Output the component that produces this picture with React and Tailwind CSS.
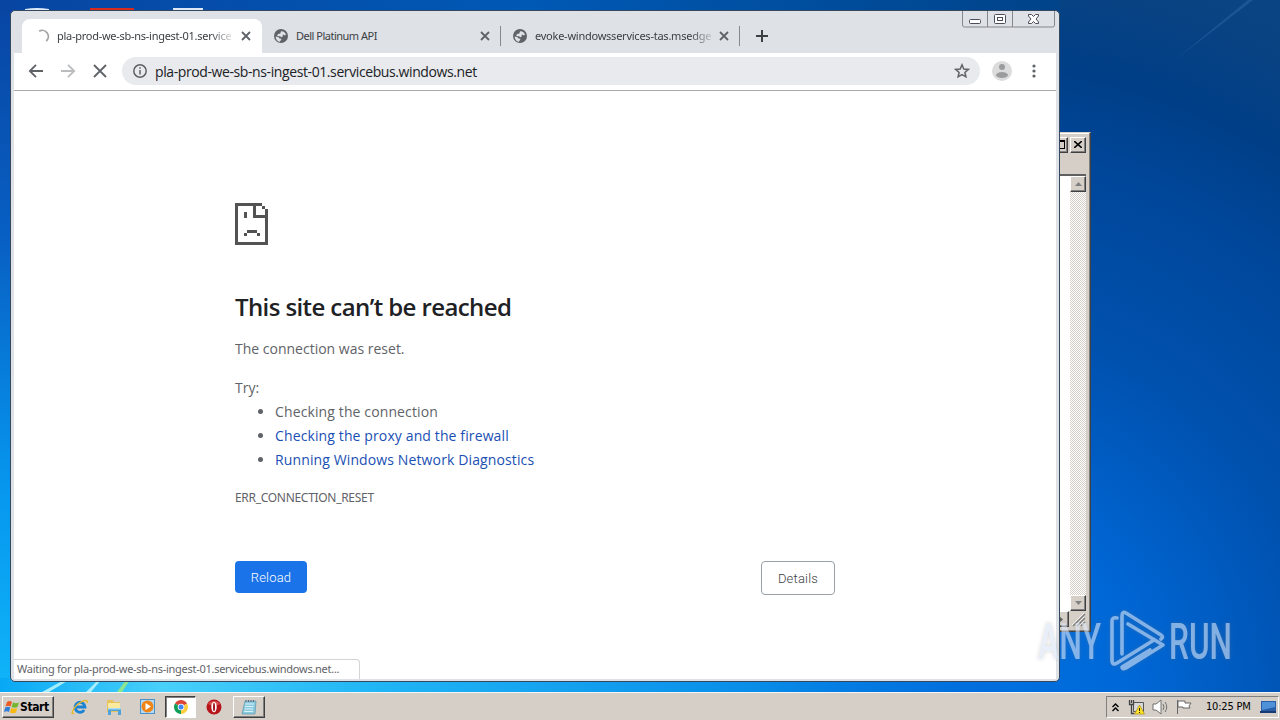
import React from 'react';

const tabs = [
    { title: 'pla-prod-we-sb-ns-ingest-01.service', active: true, tracking: 'tracking-[-0.27px]' },
    { title: 'Dell Platinum API', active: false, tracking: 'tracking-[-0.5px]' },
    { title: 'evoke-windowsservices-tas.msedge', active: false, tracking: 'tracking-[-0.24px]' },
];

const CloseIcon = () => (
    <svg width="10" height="10" viewBox="0 0 10 10" stroke="currentColor" strokeWidth="1.8" className="shrink-0">
        <path d="M1 1l8 8M9 1l-8 8" />
    </svg>
);

const Spinner = () => (
    <svg width="16" height="16" viewBox="0 0 16 16" fill="none" className="shrink-0">
        <path d="M4.200 3.300A6 6 0 0 1 11.200 13" stroke="#a3a3a6" strokeWidth="1.800" />
    </svg>
);

const Globe = () => (
    <svg width="14" height="14" viewBox="0 0 14 14" className="shrink-0">
        <circle cx="7" cy="7" r="7" fill="#5f6368" />
        <path d="M7 2.200c2.200-.4 4.600 1.400 5 3.600l-1.300.6-1.200-.9-1 .9.3 1.100-1.300.7-1.500-1H4.300L3 6.200 4.600 4.700l1.600.1z" fill="#dee1e6" />
        <path d="M1.600 7.500l2.600.6 1.500 1.400 1.800.3-.6 1.600-1 .6v.9C3.500 12.500 1.700 10.400 1.600 7.500z" fill="#dee1e6" />
    </svg>
);

const Tab = ({ title, active, tracking }) => (
    <div className={active
        ? 'relative flex h-[34px] w-[240px] items-center rounded-t-lg bg-white pl-[13px] pr-[11px] text-[#3c4043]'
        : 'relative flex h-[34px] w-[239px] items-center pl-3 pr-[11px] text-[#3c4043]'}
    >
        {active ? <Spinner /> : <Globe />}
        <span className={active ? 'ml-[6px] flex w-[176px]' : 'ml-2 flex w-[176px]'}>
            <span className={`whitespace-nowrap font-["Noto_Sans",sans-serif] text-[11px] ${tracking} ${title.length > 20 ? '[mask-image:linear-gradient(to_right,black_88%,rgba(0,0,0,0.2))]' : ''}`}>
                {title}
            </span>
        </span>
        <span className="ml-auto flex text-[#5f6368]"><CloseIcon /></span>
        {!active && <span className="absolute right-0 top-[7px] h-5 w-px bg-[#85888d]" />}
    </div>
);

const CaptionButtons = () => (
    <svg width="93" height="17" viewBox="0 0 93 17" fill="none" stroke="#85868f" className="absolute right-px top-0">
        <path d="M.5 0v14q0 2 2 2h88q2 0 2-2V0M25.500 0v16M50.500 0v16" />
        <g stroke="#4b4d58">
            <rect x="7.500" y="8.500" width="11" height="4" rx="1" fill="#fff" />
            <rect x="32.500" y="3.500" width="11" height="9" rx="1" fill="#fff" />
            <rect x="35.500" y="6.500" width="5" height="3" />
            <path d="M66.500 3.500h3l2 2 2-2h3v1.500l-2.500 3 2.500 3v1.500h-3l-2-2-2 2h-3V11l2.500-3-2.500-3z" fill="#fff" />
        </g>
    </svg>
);

const TabStrip = () => (
    <div className="relative flex h-[42px] bg-[#dee1e6] pl-2 pt-2">
        {tabs.map((t) => <Tab key={t.title} {...t} />)}
        <svg width="12" height="12" viewBox="0 0 12 12" stroke="#3c4043" strokeWidth="2" className="ml-4 mt-[11px]">
            <path d="M6 0v12M0 6h12" />
        </svg>
        <CaptionButtons />
    </div>
);

const Toolbar = () => (
    <div className="flex h-[38px] items-center border-b border-[#a8a9ab] bg-white pb-px pl-[14px]">
        <svg width="80" height="16" viewBox="0 0 80 16" fill="none" strokeWidth="1.800" className="shrink-0">
            <path d="M15 8H2.500M8 1.800L1.800 8 8 14.200" stroke="#5f6368" />
            <path d="M33 8h12.500M40 1.800L46.200 8 40 14.200" stroke="#babcbe" />
            <path d="M66 2l12 12M78 2L66 14" stroke="#5f6368" />
        </svg>
        <div className="ml-[14px] flex h-7 w-[858px] shrink-0 items-center rounded-full bg-[#e8eaed] pl-[11px] pr-[10px]">
            <svg width="14" height="14" viewBox="0 0 14 14" fill="none" stroke="#5f6368" strokeWidth="1.500">
                <circle cx="7" cy="7" r="6.200" />
                <path d="M7 6v4.500M7 3.300v1.500" />
            </svg>
            <span className="ml-2 whitespace-nowrap font-['Open_Sans',sans-serif] text-[14px] tracking-[-0.4px] text-[#202124]">
                pla-prod-we-sb-ns-ingest-01.servicebus.windows.net
            </span>
            <svg width="16" height="16" viewBox="0 0 16 16" fill="none" stroke="#5f6368" strokeWidth="1.500" className="ml-auto">
                <path d="M8 1.800l1.800 4.200 4.500.4-3.400 3 1 4.400L8 11.500l-3.900 2.300 1-4.400-3.400-3 4.500-.4z" />
            </svg>
        </div>
        <svg width="20" height="20" viewBox="0 0 20 20" className="ml-3">
            <circle cx="10" cy="10" r="10" fill="#dcdcdc" />
            <circle cx="10" cy="6" r="3" fill="#9b9c9e" />
            <ellipse cx="10" cy="14" rx="6" ry="3" fill="#9b9c9e" />
        </svg>
        <svg width="4" height="14" viewBox="0 0 4 14" fill="#5f6368" className="ml-5">
            <circle cx="2" cy="2" r="1.600" />
            <circle cx="2" cy="7" r="1.600" />
            <circle cx="2" cy="12" r="1.600" />
        </svg>
    </div>
);

const SadPage = () => (
    <svg width="33" height="42" viewBox="0 0 11 14" fill="#535353" shapeRendering="crispEdges">
        <path d="M0 0h9v1H7v3h3V2h1v12H0zM1 1v12h9V5H6V1zM9 1h1v1H9zM3 3h1v2H3zM4 9h3.400v1H4zM3 10h1v1H3zM7.300 10h1v1h-1z" fillRule="evenodd" />
    </svg>
);

const ErrorPage = () => (
    <div className="flex flex-1 flex-col bg-white">
        <div className="ml-[221px] w-[600px] pt-[112px] font-['Open_Sans','Noto_Sans',sans-serif] text-[#5f6368]">
            <SadPage />
            <h1 className="mt-[44px] whitespace-nowrap text-[24px] font-semibold leading-[36px] tracking-[-0.6px] text-[#202124]">
                This site can’t be reached
            </h1>
            <p className="mt-[12px] text-[14px] leading-6">The connection was reset.</p>
            <p className="mt-[15px] text-[14px] leading-6">Try:</p>
            <ul className="list-disc pl-10 text-[14px] leading-6 tracking-[0.12px]">
                <li>Checking the connection</li>
                <li><a className="text-[#1a4fb4]">Checking the proxy and the firewall</a></li>
                <li><a className="text-[#1a4fb4]">Running Windows Network Diagnostics</a></li>
            </ul>
            <div className="mt-[17px] font-['Noto_Sans',sans-serif] text-[12px] leading-[18px] tracking-[-0.3px]">ERR_CONNECTION_RESET</div>
            <div className="mt-[54px] flex items-start justify-between font-['Roboto',sans-serif] text-[13px] font-normal tracking-[0.2px]">
                <button className="h-8 w-[72px] rounded bg-[#1a73e8] pt-px font-light text-white">Reload</button>
                <button className="h-[34px] w-[74px] rounded border border-[#9aa0a6] pt-px font-light text-[#3c4043]">Details</button>
            </div>
        </div>
        <div className="mt-auto flex h-5 w-[346px] items-center rounded-tr border-r border-t border-[#d3d4d6] pl-[3px] font-['Noto_Sans',sans-serif] text-[11px] text-[#5f6368]">
            <span className="whitespace-nowrap tracking-[-0.27px]">Waiting for pla-prod-we-sb-ns-ingest-01.servicebus.windows.net...</span>
        </div>
    </div>
);

const BrowserWindow = () => (
    <div className="absolute left-[10px] top-[10px] flex h-[672px] w-[1050px] flex-col overflow-hidden rounded-[5px] border border-[#34495f] bg-[#dee1e6] px-[3px] pb-[2px]">
        <TabStrip />
        <Toolbar />
        <ErrorPage />
    </div>
);

const bevel = 'flex h-4 w-4 items-center justify-center border border-t-white border-l-white border-r-[#404040] border-b-[#404040] bg-[#d5cfc8] shadow-[inset_-1px_-1px_0_#808080]';

const NotepadWindow = () => (
    <div className="absolute left-[991px] top-[132px] flex h-[500px] w-[100px] flex-col border border-t-[#d5cfc8] border-r-[#404040] border-b-[#404040] bg-[#d5cfc8] pb-1 pr-1 pt-[3px] shadow-[inset_-1px_-1px_0_#808080,inset_0_1px_0_#fff]">
        <div className="flex h-[17px] items-center justify-end gap-[2px]">
            <span className={bevel}><span className="h-[9px] w-[9px] border border-t-2 border-black" /></span>
            <span className={bevel}>
                <svg width="8" height="7" viewBox="0 0 8 7" stroke="#000" strokeWidth="1.600"><path d="M0 0l8 7M8 0L0 7" /></svg>
            </span>
        </div>
        <div className="h-[21px]" />
        <div className="flex flex-1 border-t-2 border-[#606060]">
            <div className="flex-1 bg-white" />
            <div className="flex w-4 flex-col justify-between bg-[#e9e7e3] bg-[conic-gradient(#fff_25%,#d5cfc8_0_50%,#fff_0_75%,#d5cfc8_0)] bg-[size:2px_2px]">
                <span className={bevel}><svg width="7" height="4" viewBox="0 0 7 4" fill="#808080"><path d="M0 4l3.500-4L7 4z" /></svg></span>
                <span className={bevel}><svg width="7" height="4" viewBox="0 0 7 4" fill="#808080"><path d="M0 0l3.500 4L7 0z" /></svg></span>
            </div>
        </div>
        <div className="flex h-4 justify-end">
            <span className={bevel}><svg width="4" height="7" viewBox="0 0 4 7" fill="#606060"><path d="M0 0l4 3.500L0 7z" /></svg></span>
            <svg width="17" height="16" viewBox="0 0 17 16" stroke="#808080" strokeWidth="1.500">
                <path d="M4 15L16 3M8 15l8-8M12 15l4-4" />
                <path d="M3 14L15 2M7 14l8-8M11 14l4-4" stroke="#fff" strokeWidth=".8" />
            </svg>
        </div>
    </div>
);

const Watermark = () => (
    <svg width="215" height="76" viewBox="0 0 215 76" className="absolute left-[1035px] top-[606px] overflow-visible opacity-60 [filter:drop-shadow(0_0_2px_rgba(120,120,120,0.5))]">
        <g fill="#dce6f5" className="font-['Roboto',sans-serif] text-[50px] font-medium">
            <text x="3" y="53" textLength="63" lengthAdjust="spacingAndGlyphs">ANY</text>
            <text x="134" y="53" textLength="63" lengthAdjust="spacingAndGlyphs">RUN</text>
        </g>
        <g fill="none" stroke="#dce6f5" strokeWidth="3.600" strokeLinejoin="round" strokeLinecap="round">
            <path d="M82 12q-5-1-5 3v39q0 6 5 3l37-23" />
            <path d="M87 48V10q0-5 4-3l35 22q3 2 0 4" />
            <path d="M93 18l35 21-37 23q-4 2-4-1l28-17" />
        </g>
    </svg>
);

const Wallpaper = () => (
    <svg width="1280" height="692" viewBox="0 0 1280 692" className="absolute left-0 top-0">
        <defs>
            <radialGradient id="right" gradientUnits="userSpaceOnUse" cx="950" cy="690" r="740">
                <stop offset="0" stopColor="#0073e5" />
                <stop offset=".25" stopColor="#0067d6" />
                <stop offset=".5" stopColor="#0051ae" />
                <stop offset=".72" stopColor="#00479b" />
                <stop offset=".86" stopColor="#003e86" />
                <stop offset="1" stopColor="#0b4482" />
            </radialGradient>
            <linearGradient id="left" x2="0" y2="1">
                <stop offset="0" stopColor="#0845a2" />
                <stop offset=".35" stopColor="#0860c4" />
                <stop offset=".7" stopColor="#0696ee" />
                <stop offset="1" stopColor="#10b4f8" />
            </linearGradient>
            <linearGradient id="top">
                <stop offset="0" stopColor="#0845a2" />
                <stop offset=".5" stopColor="#0059b5" />
                <stop offset="1" stopColor="#004389" />
            </linearGradient>
            <linearGradient id="bottom">
                <stop offset="0" stopColor="#08a8f5" />
                <stop offset=".15" stopColor="#48d0fa" />
                <stop offset=".35" stopColor="#20b5f5" />
                <stop offset=".7" stopColor="#088de9" />
                <stop offset="1" stopColor="#006bdc" stopOpacity="0" />
            </linearGradient>
        </defs>
        <rect width="1280" height="692" fill="url(#right)" />
        <rect width="500" height="692" fill="url(#left)" />
        <rect y="678" x="500" width="500" height="14" fill="#006bdc" />
        <rect width="1060" height="12" fill="url(#top)" />
        <rect y="678" width="1080" height="14" fill="url(#bottom)" />
        <path d="M42 692l22-12h5l-20 12zM86 692l12-12h3l-10 12z" fill="#a8edfb" />
        <path d="M117 692l9-12h4l-8 12z" fill="#8be68f" />
        <path d="M1175 60L1248 0h5z" fill="#3f79b5" opacity=".35" />
        <path d="M25 9q12-2 24 0v1H25zM173 8h30v2h-30z" fill="#dfe8f5" />
        <path d="M90 8h44v3H90z" fill="#d82b20" />
    </svg>
);

const StartFlag = () => (
    <svg width="16" height="16" viewBox="0 0 16 16" className="shrink-0">
        <path d="M3 3q3-2 5 0L6.500 7.500q-2-1.500-5 0z" fill="#ee5a24" />
        <path d="M9 3.500q3 1.500 6 0l-1.500 4.500q-3 1.500-6 0z" fill="#74b72e" />
        <path d="M1.200 8.500q3-1.500 5 0L5 13q-2-1.500-5 0z" fill="#2f7fd8" />
        <path d="M7.200 9q3 1.500 6 0L12 13.500q-3 1.500-6 0z" fill="#f8b912" />
    </svg>
);

const quickIcons = {
    ie: (
        <svg width="18" height="18" viewBox="0 0 18 18" fill="none">
            <path d="M13.200 12A5 5 0 1 1 14 9H5" stroke="#1b83d2" strokeWidth="2.800" />
            <path d="M3 15c-4 3-1-5 4-9s11-5 9-1" stroke="#e9b92c" strokeWidth="1.400" />
        </svg>
    ),
    explorer: (
        <svg width="18" height="18" viewBox="0 0 18 18">
            <path d="M2 2h6l1 2h6v10H2z" fill="#e6c35c" />
            <path d="M3 5h12v5H3z" fill="#fbe99f" />
            <path d="M3 17v-7h13v7h-3v-4H6v4z" fill="#4fa3d8" />
            <path d="M3 10h13v1.500H3z" fill="#a9dbf2" />
        </svg>
    ),
    media: (
        <svg width="18" height="18" viewBox="0 0 18 18">
            <rect x="1.500" y="1.500" width="14" height="14" fill="#b5d8f3" stroke="#4b91ca" />
            <circle cx="8.500" cy="8.500" r="6" fill="#f08516" />
            <path d="M6.500 5v7l5.500-3.500z" fill="#fff" />
        </svg>
    ),
    opera: (
        <svg width="18" height="18" viewBox="0 0 18 18">
            <circle cx="9" cy="9" r="7.500" fill="#b8151b" />
            <path d="M3 6a7 6 0 0 1 12 0q-6 3-12 0z" fill="#d8504c" />
            <ellipse cx="9" cy="9" rx="2.700" ry="5.300" fill="#fff" />
            <ellipse cx="9" cy="9" rx="1" ry="4.300" fill="#9d1419" />
        </svg>
    ),
};

const ChromeLogo = () => (
    <svg width="14" height="14" viewBox="0 0 14 14">
        <path d="M7 7L.94 3.500A7 7 0 0 1 13.060 3.500z" fill="#db4437" />
        <path d="M7 7l6.060-3.500A7 7 0 0 1 7 14z" fill="#ffcd40" />
        <path d="M7 7v7A7 7 0 0 1 .94 3.500z" fill="#0f9d58" />
        <circle cx="7" cy="7" r="3.300" fill="#fff" />
        <circle cx="7" cy="7" r="2.500" fill="#4285f4" />
    </svg>
);

const NotepadIcon = () => (
    <svg width="17" height="17" viewBox="0 0 17 17">
        <path d="M4 2h11l-1 13H1z" fill="#8bc9de" stroke="#5b98ac" strokeWidth=".7" />
        <path d="M4 5h9M4 7.500h8.500M3.500 10H12M3 12.500h9" stroke="#daf2f8" />
        <path d="M5 1v2M7.500 1v2M10 1v2M12.500 1v2" stroke="#667" />
    </svg>
);

const Tray = () => (
    <div className="flex h-[22px] w-[173px] items-center border border-b-white border-l-[#808080] border-r-white border-t-[#808080]">
        <svg width="7" height="9" viewBox="0 0 7 9" fill="none" stroke="#000" strokeWidth="1.400" className="ml-[5px]">
            <path d="M.5 4l3-3 3 3M.5 8l3-3 3 3" />
        </svg>
        <svg width="17" height="16" viewBox="0 0 17 16" fill="none" className="ml-[9px]">
            <path d="M5.500 3.500h10v9h-10z" fill="#d8d8d8" stroke="#555" />
            <path d="M1.500 1v4.500h4V1M3.500 1v3M3.500 5.500v9h3" stroke="#444" strokeWidth="1.300" />
            <path d="M11.500 6l5 9h-10z" fill="#ffe32a" stroke="#a98d0c" strokeWidth=".7" />
            <path d="M11.500 9v3M11.500 13v1" stroke="#222" />
        </svg>
        <svg width="17" height="16" viewBox="0 0 17 16" fill="none" className="ml-[7px]">
            <path d="M1 5h3l5-4v14l-5-4H1z" fill="#fff" stroke="#707070" />
            <path d="M11 5q2 3 0 6M13 3q3.500 5 0 10" stroke="#707070" />
        </svg>
        <svg width="17" height="16" viewBox="0 0 17 16" className="ml-[7px]">
            <path d="M1.500 1v14M2 2h7v2h6l-2 3 1 2H7V8H2z" fill="#fff" stroke="#666" />
        </svg>
        <span className="ml-[13px] w-[46px] whitespace-nowrap font-['DejaVu_Sans_Condensed','DejaVu_Sans',sans-serif] text-[11px] tracking-[-0.2px] text-black">10:25 PM</span>
        <svg width="16" height="14" viewBox="0 0 16 14" className="ml-2">
            <path d="M1 1h15v10H1z" fill="#285da8" />
            <path d="M2 2h13v5L2 10z" fill="#4e91d8" />
            <path d="M0 11h16v2H0z" fill="#173b72" />
        </svg>
    </div>
);

const Taskbar = () => (
    <div className="absolute left-0 top-[692px] flex h-7 w-[1280px] items-center border-t border-[#f7f6f4] bg-[#d5cfc8]">
        <button className="ml-[2px] mt-px flex h-[22px] w-[52px] items-center border border-b-[#404040] border-l-white border-r-[#404040] border-t-white pl-px shadow-[inset_-1px_-1px_0_#808080]">
            <StartFlag />
            <span className="font-['DejaVu_Sans_Condensed','DejaVu_Sans',sans-serif] text-[12px] font-bold tracking-[-0.4px] text-black">Start</span>
        </button>
        <div className="ml-[17px] flex items-center gap-4">
            {quickIcons.ie}
            {quickIcons.explorer}
            {quickIcons.media}
        </div>
        <span className="ml-2 mt-px flex h-[22px] w-[31px] items-center justify-center border border-b-white border-l-[#404040] border-r-white border-t-[#404040] bg-white shadow-[inset_1px_1px_0_#808080]"><ChromeLogo /></span>
        <span className="ml-[9px]">{quickIcons.opera}</span>
        <span className="ml-[10px] mt-px flex h-[22px] w-8 items-center justify-center border border-b-[#404040] border-l-white border-r-[#404040] border-t-white shadow-[inset_-1px_-1px_0_#808080]"><NotepadIcon /></span>
        <div className="ml-auto mr-px mt-px"><Tray /></div>
    </div>
);

const App = () => (
    <div className="relative h-[720px] w-[1280px] overflow-hidden bg-[#d5cfc8]">
        <Wallpaper />
        <NotepadWindow />
        <BrowserWindow />
        <Taskbar />
        <Watermark />
    </div>
);

export default App;
